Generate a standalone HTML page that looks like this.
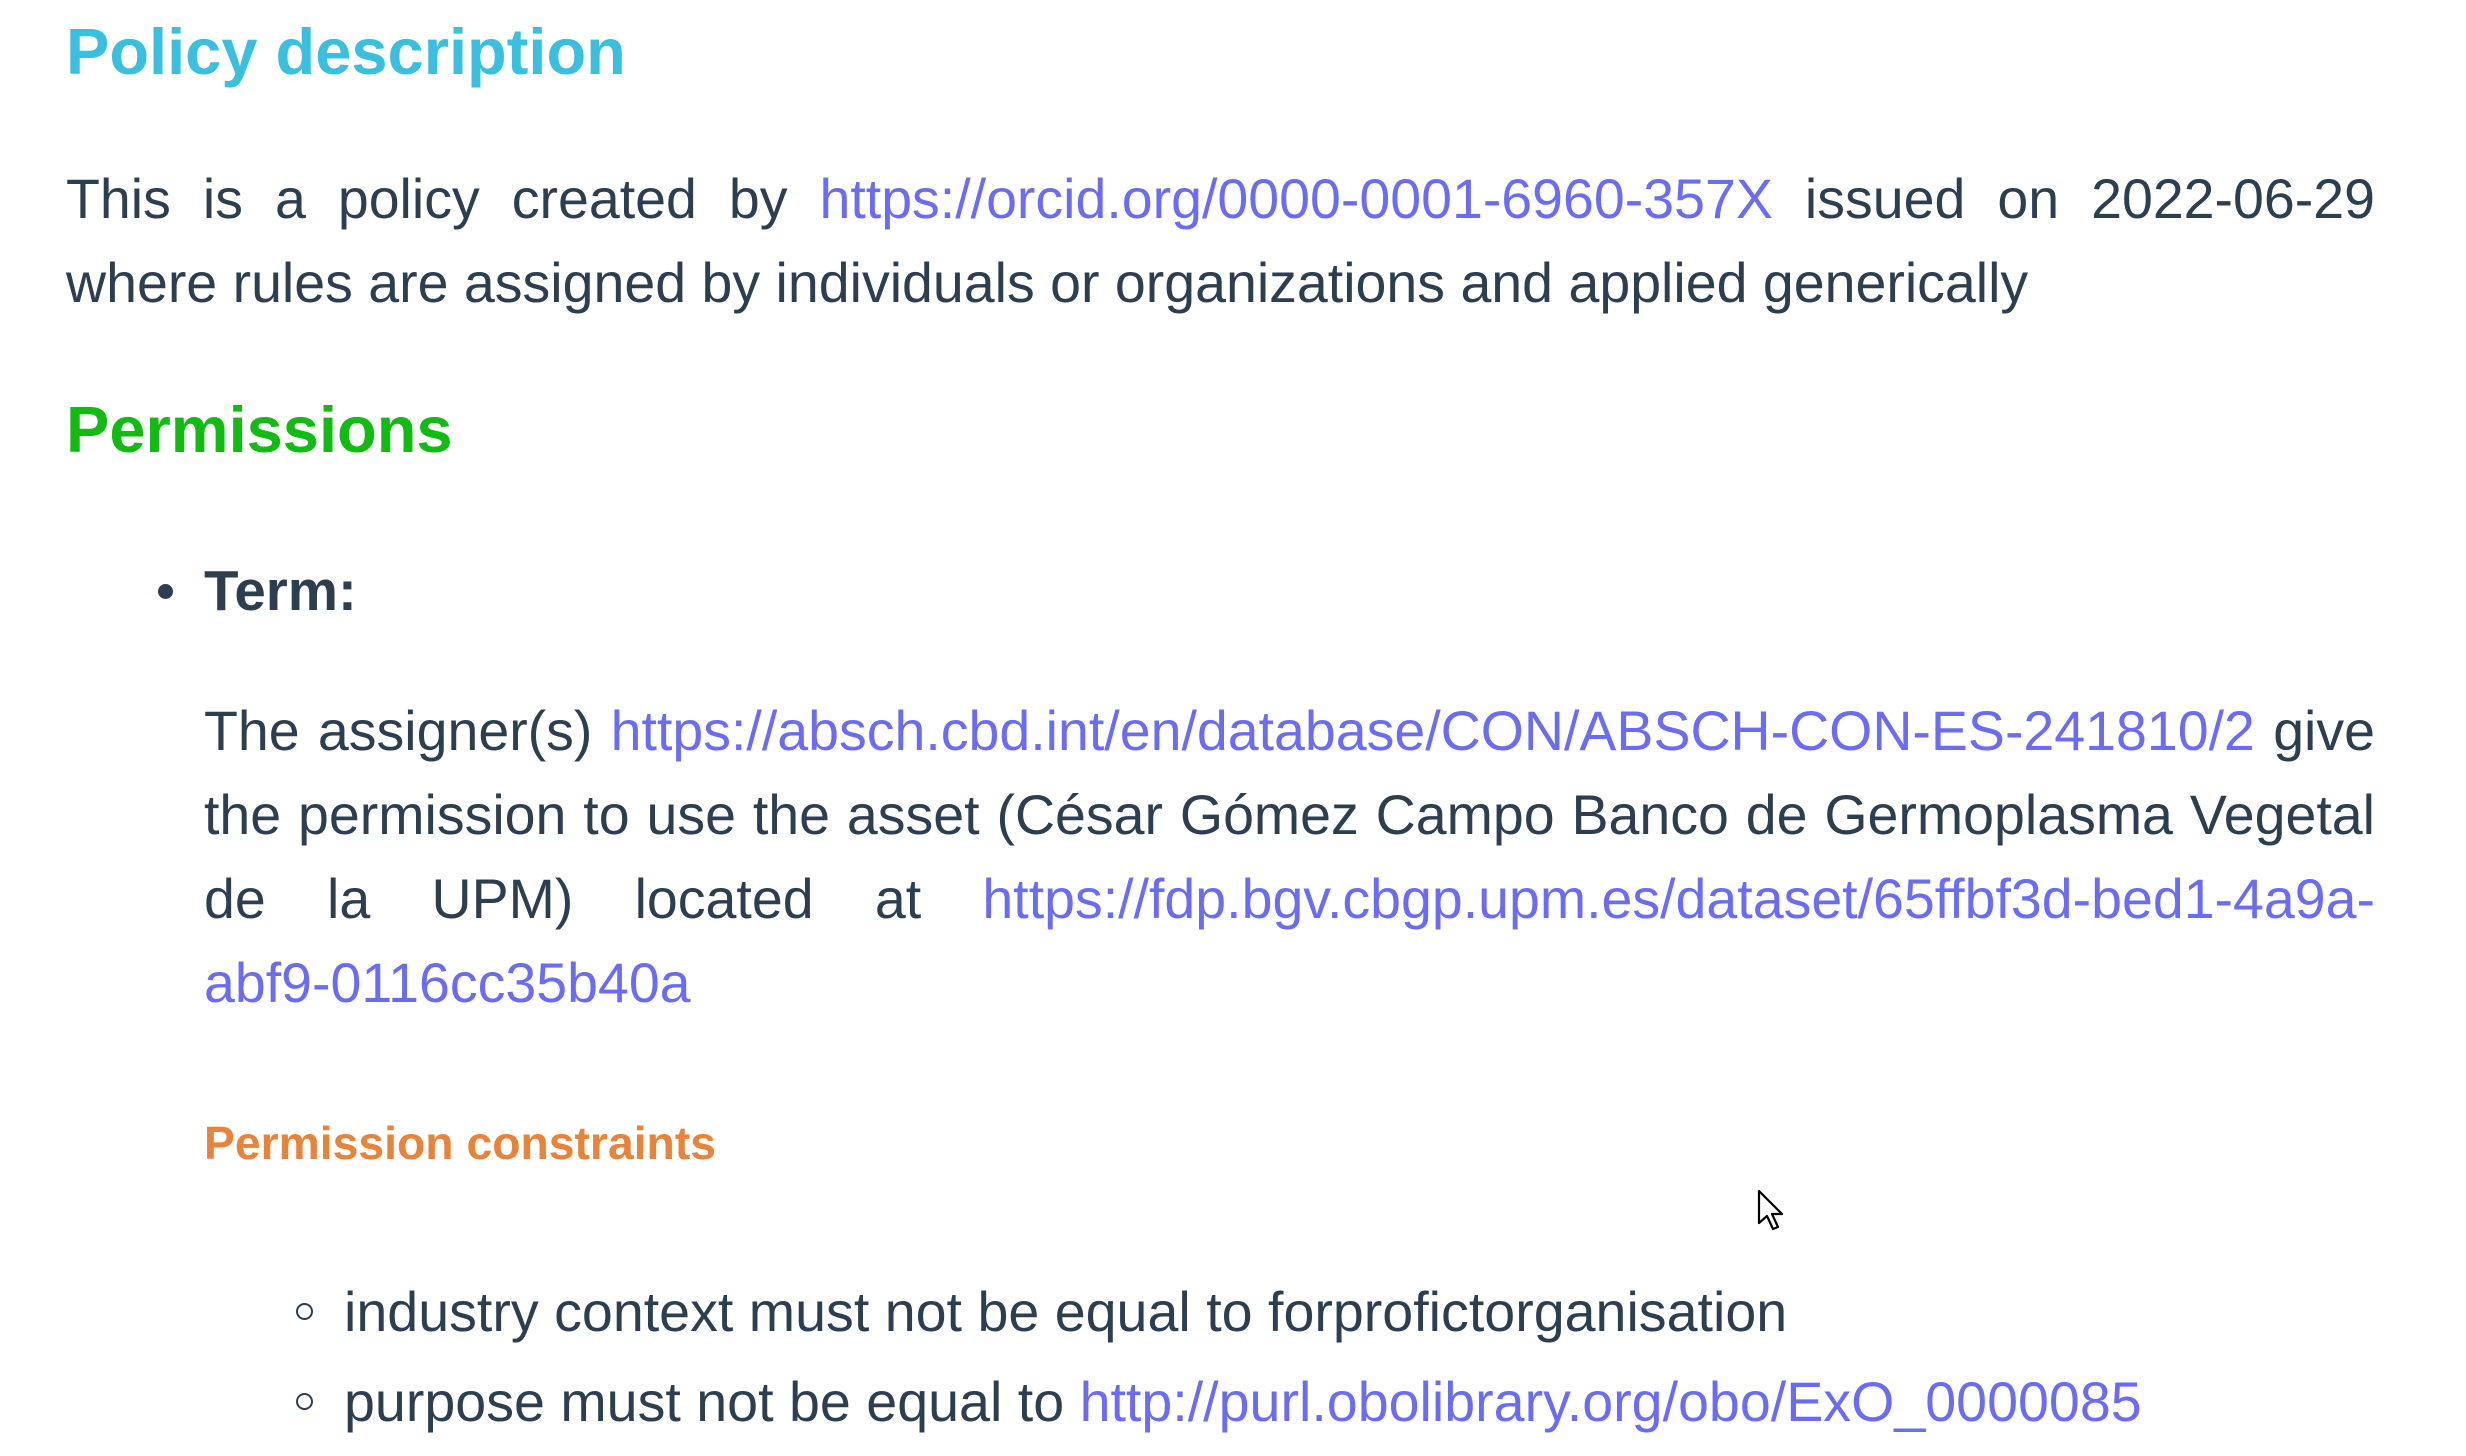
<!DOCTYPE html>
<html><head><meta charset="utf-8"><style>
html,body{margin:0;padding:0;background:#fff;width:2466px;height:1456px;overflow:hidden;position:relative}
body{font-family:"Liberation Sans",Arial,sans-serif;color:#2c3e50}
.a{position:absolute}
h{display:block;font-weight:bold;font-size:65px;line-height:63px;white-space:nowrap}
.p{font-size:55.5px;line-height:84px;width:2309px}
.j{text-align:justify;text-align-last:justify;white-space:nowrap}
a{color:#6b6cf5;text-decoration:none}
</style></head><body>
<div class="a" style="left:66px;top:20px"><h style="color:#3bbfdf">Policy description</h></div>
<div class="a p" style="left:66px;top:157px">
<div class="j">This is a policy created by <a>https://orcid.org/0000-0001-6960-357X</a> issued on 2022-06-29</div>
<div>where rules are assigned by individuals or organizations and applied generically</div>
</div>
<div class="a" style="left:66px;top:398px"><h style="color:#11bb11">Permissions</h></div>
<div class="a" style="left:158px;top:584px;width:15px;height:15px;border-radius:50%;background:#2c3e50"></div>
<div class="a" style="left:204px;top:549px;font-size:56.5px;line-height:84px;font-weight:bold">Term:</div>
<div class="a p" style="left:204px;top:689px;width:2171px">
<div class="j">The assigner(s) <a>https://absch.cbd.int/en/database/CON/ABSCH-CON-ES-241810/2</a> give</div>
<div class="j">the permission to use the asset (César Gómez Campo Banco de Germoplasma Vegetal</div>
<div class="j">de la UPM) located at <a>https://fdp.bgv.cbgp.upm.es/dataset/65ffbf3d-bed1-4a9a-</a></div>
<div><a>abf9-0116cc35b40a</a></div>
</div>
<div class="a" style="left:204px;top:1121px;font-size:46.3px;line-height:44px;font-weight:bold;color:#e8833a">Permission constraints</div>
<div class="a" style="left:296px;top:1303px;width:13px;height:13px;border:2px solid #2c3e50;border-radius:50%"></div>
<div class="a" style="left:296px;top:1393px;width:13px;height:13px;border:2px solid #2c3e50;border-radius:50%"></div>
<div class="a" style="left:344px;top:1268px;font-size:55.6px;line-height:89.7px;white-space:nowrap">
<div>industry context must not be equal to forprofictorganisation</div>
<div>purpose must not be equal to <a>http://purl.obolibrary.org/obo/ExO_0000085</a></div>
</div>
<svg class="a" style="left:1757px;top:1189px" width="30" height="44" viewBox="0 0 30 44"><path d="M2 2 L2 34 L10 27 L16 40 L21 38 L15 25 L25 25 Z" fill="#fff" stroke="#000" stroke-width="2.2" stroke-linejoin="round"/></svg>
</body></html>
